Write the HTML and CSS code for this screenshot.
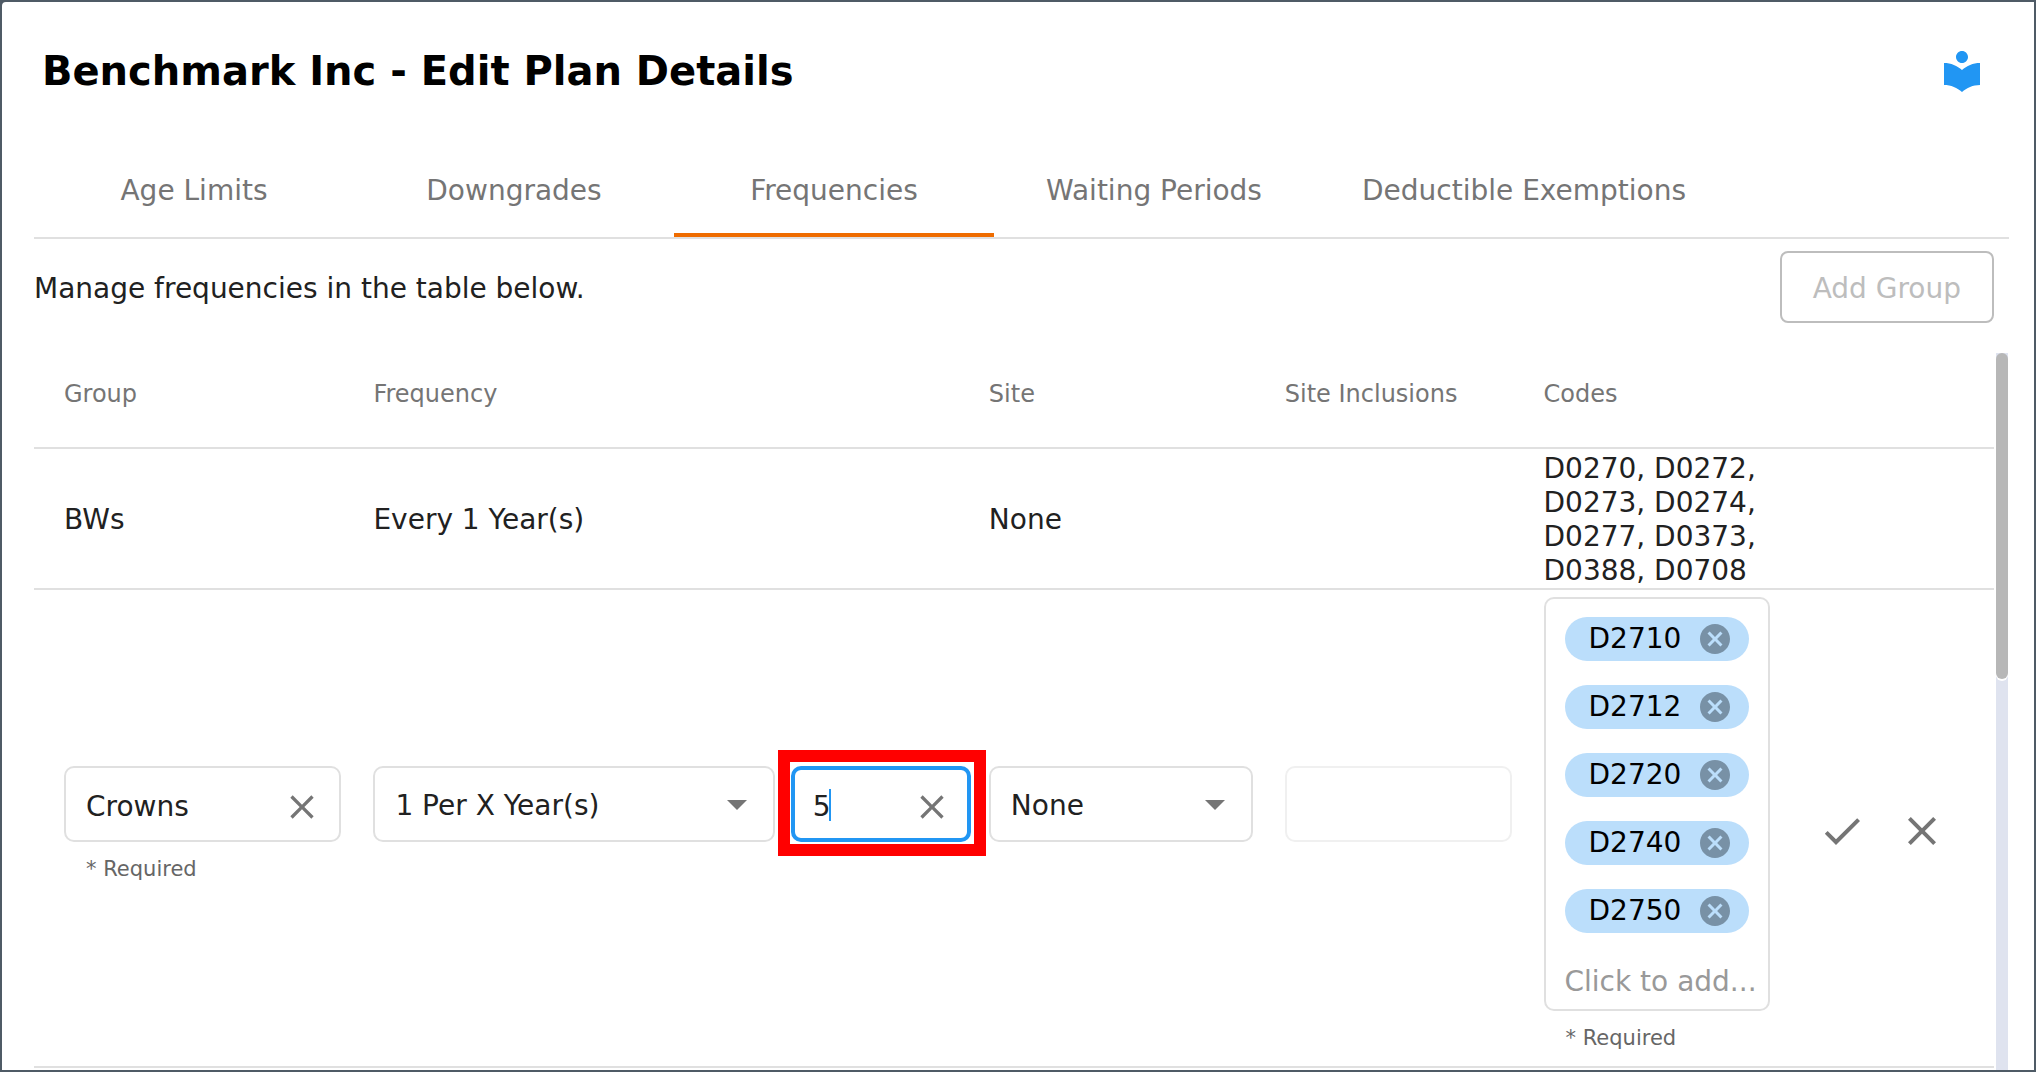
FILE: index.html
```html
<!DOCTYPE html>
<html lang="en">
<head>
<meta charset="utf-8">
<title>Benchmark Inc - Edit Plan Details</title>
<link rel="stylesheet" href="styles.css">
</head>
<body>
<svg class="sprite" aria-hidden="true">
  <symbol id="library" viewBox="0 0 24 24"><path d="M12 11.55C9.64 9.35 6.48 8 3 8v11c3.48 0 6.64 1.35 9 3.55 2.36-2.19 5.52-3.55 9-3.55V8c-3.48 0-6.64 1.35-9 3.55zM12 8c1.66 0 3-1.34 3-3s-1.34-3-3-3-3 1.34-3 3 1.34 3 3 3z"/></symbol>
  <symbol id="close" viewBox="0 0 24 24"><path d="M19 6.41 17.59 5 12 10.59 6.41 5 5 6.41 10.59 12 5 17.59 6.41 19 12 13.41 17.59 19 19 17.59 13.41 12z"/></symbol>
  <symbol id="check" viewBox="0 0 24 24"><path d="M9 16.17 4.83 12l-1.42 1.41L9 19 21 7l-1.41-1.41z"/></symbol>
  <symbol id="cancel" viewBox="0 0 24 24"><path d="M12 2C6.47 2 2 6.47 2 12s4.47 10 10 10 10-4.47 10-10S17.53 2 12 2zm5 13.59L15.59 17 12 13.41 8.41 17 7 15.59 10.59 12 7 8.41 8.41 7 12 10.59 15.59 7 17 8.41 13.41 12z"/></symbol>
  <symbol id="drop" viewBox="0 0 24 24"><path d="m7 10 5 5 5-5z"/></symbol>
</svg>
<main class="panel">
  <header class="header">
    <h1 class="title">Benchmark Inc - Edit Plan Details</h1>
    <button class="icon-button guide" type="button" aria-label="Open guide"><svg class="icon"><use href="#library"/></svg></button>
  </header>

  <div class="tabs" role="tablist">
    <button class="tab" type="button" role="tab">Age Limits</button>
    <button class="tab" type="button" role="tab">Downgrades</button>
    <button class="tab tab-active" type="button" role="tab" aria-selected="true">Frequencies</button>
    <button class="tab" type="button" role="tab">Waiting Periods</button>
    <button class="tab" type="button" role="tab">Deductible Exemptions</button>
  </div>

  <div class="toolbar">
    <p class="intro">Manage frequencies in the table below.</p>
    <button class="add-button" type="button" disabled>Add Group</button>
  </div>

  <div class="scroll-area">
    <table class="grid">
      <colgroup>
        <col class="col-group"><col class="col-frequency"><col class="col-site"><col class="col-codes"><col class="col-codes"><col class="col-actions">
      </colgroup>
      <thead>
        <tr>
          <th scope="col">Group</th>
          <th scope="col">Frequency</th>
          <th scope="col">Site</th>
          <th scope="col">Site Inclusions</th>
          <th scope="col">Codes</th>
          <td></td>
        </tr>
      </thead>
      <tbody>
        <tr class="view-row">
          <td>BWs</td>
          <td>Every 1 Year(s)</td>
          <td>None</td>
          <td></td>
          <td>D0270, D0272, D0273, D0274, D0277, D0373, D0388, D0708</td>
          <td></td>
        </tr>
        <tr class="edit-row">
          <td>
            <div class="field">
              <input class="control" type="text" value="Crowns" aria-label="Group" aria-describedby="group-help">
              <button class="icon-button clear" type="button" aria-label="Clear group"><svg class="icon"><use href="#close"/></svg></button>
            </div>
            <p class="helper" id="group-help">* Required</p>
          </td>
          <td class="frequency-cell">
            <div class="frequency">
              <div class="field">
                <select class="control" aria-label="Frequency"><option>1 Per X Year(s)</option></select>
                <svg class="icon arrow"><use href="#drop"/></svg>
              </div>
              <div class="field years">
                <input class="control control-focused" type="text" value="5" aria-label="Years">
                <span class="caret"></span>
                <button class="icon-button clear" type="button" aria-label="Clear years"><svg class="icon"><use href="#close"/></svg></button>
              </div>
            </div>
            <p class="helper"></p>
          </td>
          <td>
            <div class="field">
              <select class="control" aria-label="Site"><option>None</option></select>
              <svg class="icon arrow"><use href="#drop"/></svg>
            </div>
            <p class="helper"></p>
          </td>
          <td>
            <div class="field"><input class="control" type="text" aria-label="Site inclusions" disabled></div>
            <p class="helper"></p>
          </td>
          <td>
            <div class="codes">
              <div class="chip">D2710<button class="icon-button remove" type="button" aria-label="Remove D2710"><svg class="icon"><use href="#cancel"/></svg></button></div>
              <div class="chip">D2712<button class="icon-button remove" type="button" aria-label="Remove D2712"><svg class="icon"><use href="#cancel"/></svg></button></div>
              <div class="chip">D2720<button class="icon-button remove" type="button" aria-label="Remove D2720"><svg class="icon"><use href="#cancel"/></svg></button></div>
              <div class="chip">D2740<button class="icon-button remove" type="button" aria-label="Remove D2740"><svg class="icon"><use href="#cancel"/></svg></button></div>
              <div class="chip">D2750<button class="icon-button remove" type="button" aria-label="Remove D2750"><svg class="icon"><use href="#cancel"/></svg></button></div>
              <input class="code-input" type="text" placeholder="Click to add..." aria-label="Add code" aria-describedby="codes-help">
            </div>
            <p class="helper" id="codes-help">* Required</p>
          </td>
          <td>
            <div class="actions">
              <button class="icon-button" type="button" aria-label="Save"><svg class="icon"><use href="#check"/></svg></button>
              <button class="icon-button" type="button" aria-label="Cancel"><svg class="icon"><use href="#close"/></svg></button>
            </div>
          </td>
        </tr>
      </tbody>
    </table>
    <div class="scrollbar"><div class="thumb"></div></div>
  </div>
</main>
</body>
</html>
```
FILE: styles.css
```css
* { box-sizing: border-box; }

body {
  margin: 0;
  background: #4f5b66;
  color: #212121;
  font-family: Verdana, "DejaVu Sans", sans-serif;
  font-size: 28px;
  line-height: 34px;
}

button, input, select { font: inherit; color: inherit; }
p, h1 { margin: 0; }
.sprite { display: none; }

.panel {
  display: flex;
  flex-direction: column;
  min-height: 100vh;
  padding: 0 25px 0 32px;
  background: #fff;
  border: 2px solid #4f5b66;
  border-radius: 6px 0 0 0;
}

.icon { display: block; width: 48px; height: 48px; fill: currentColor; }

.icon-button {
  padding: 0;
  border: 0;
  background: none;
  color: #757575;
}

.header {
  display: flex;
  align-items: center;
  justify-content: space-between;
  padding: 45px 23px 46px 8px;
}

.title { color: #000; font-size: 40px; font-weight: 700; line-height: 48px; }
.guide { color: #2196f3; }

.tabs { display: flex; border-bottom: 2px solid #e0e0e0; }

.tab {
  min-width: 320px;
  height: 96px;
  padding: 8px 48px 0;
  border: 0;
  border-bottom: 4px solid transparent;
  background: none;
  color: #757575;
  white-space: nowrap;
}

.tab-active { border-bottom-color: #ef6c00; }

.toolbar {
  display: flex;
  align-items: center;
  justify-content: space-between;
  padding: 12px 15px 30px 0;
}

.intro { padding-top: 4px; }

.add-button {
  height: 72px;
  padding: 4px 31px 0;
  border: 2px solid #bdbdbd;
  border-radius: 8px;
  background: #fff;
  color: #bdbdbd;
}

.scroll-area { display: flex; flex: 1; gap: 2px; padding-right: 1px; }

.grid {
  flex: 1;
  align-self: flex-start;
  table-layout: fixed;
  border-spacing: 0;
}

.col-group { width: 16.5%; }
.col-frequency { width: 31.4%; }
.col-site { width: 15.1%; }
.col-codes { width: 13.2%; }
.col-actions { width: 10.6%; }

th, td {
  padding: 3px 16px 0;
  border-bottom: 2px solid #e0e0e0;
  text-align: left;
  vertical-align: middle;
}

th:first-child, td:first-child { padding-left: 30px; }

th {
  height: 96px;
  padding-bottom: 16px;
  color: #757575;
  font-size: 24px;
  font-weight: 400;
  white-space: nowrap;
}

.edit-row td { padding-top: 7px; padding-bottom: 7px; }
.edit-row .frequency-cell { padding-right: 2px; }

.frequency { display: flex; gap: 16px; }
.field { position: relative; flex: 1; }
.years { flex: 0 0 180px; }

.years::after {
  content: "";
  position: absolute;
  inset: -16px -15px -14px -13px;
  border: 12px solid #f00;
  pointer-events: none;
}

.control {
  display: block;
  width: 100%;
  height: 76px;
  padding: 4px 64px 0 20px;
  border: 2px solid #e0e0e0;
  border-radius: 10px;
  outline: 0;
  background: #fff;
  appearance: none;
}

.control-focused { padding-left: 18px; border: 4px solid #2196f3; }
.control:disabled { border-color: #f0f0f0; }

.clear { position: absolute; top: 21px; right: 19px; }
.clear .icon { width: 40px; height: 40px; }
.arrow { position: absolute; top: 14px; right: 14px; color: #757575; pointer-events: none; }

.caret {
  position: absolute;
  top: 23px;
  left: 38px;
  width: 2px;
  height: 32px;
  background: #2196f3;
}

.helper {
  height: 48px;
  padding: 12px 22px 0;
  color: #666;
  font-size: 21px;
  line-height: 30px;
}

.codes {
  display: flex;
  flex-direction: column;
  align-items: flex-start;
  gap: 24px;
  padding: 18px 8px 8px 19px;
  border: 2px solid #e0e0e0;
  border-radius: 10px;
}

.chip {
  display: flex;
  align-items: center;
  gap: 16px;
  height: 44px;
  padding: 0 16px 0 24px;
  border-radius: 22px;
  background: #bbdefb;
  color: #000;
}

.remove { color: #7891a6; }
.remove .icon { width: 36px; height: 36px; }

.code-input {
  width: 100%;
  height: 44px;
  padding: 4px 0 0;
  border: 0;
  outline: 0;
  background: none;
  text-overflow: ellipsis;
}

.code-input::placeholder { color: #999; opacity: 1; }

.actions { display: flex; gap: 32px; padding: 6px 0 0 16px; }

.scrollbar { width: 12px; background: #dfe3ef; }
.thumb { height: 326px; border-radius: 6px; background: #b7b7b7; box-shadow: 0 2px 0 #fff; }
```
